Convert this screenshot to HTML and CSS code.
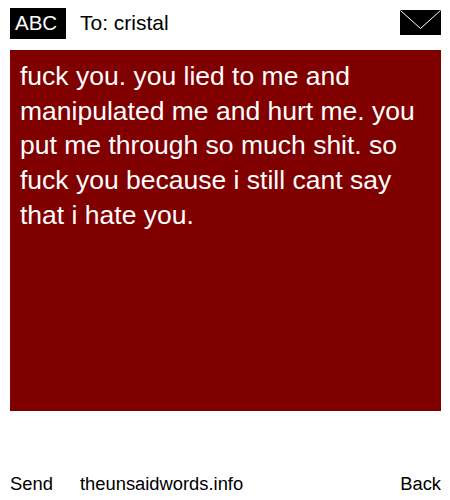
FILE: index.html
```
<!DOCTYPE html>
<html>
<head>
<meta charset="utf-8">
<link rel="stylesheet" href="styles.css">
</head>
<body>
<div class="page">
  <header class="top">
    <span class="abc">ABC</span>
    <span class="to">To: cristal</span>
    <svg class="env" width="41" height="25" viewBox="0 0 41 25"><rect width="41" height="25" fill="#000"/><path d="M0.5 0.5 L20.5 18.5 L40.5 0.5" fill="none" stroke="#fff" stroke-width="1"/></svg>
  </header>
  <main class="msg">fuck you. you lied to me and manipulated me and hurt me. you put me through so much shit. so fuck you because i still cant say that i hate you.</main>
  <footer class="bottom">
    <span class="send">Send</span>
    <span class="site">theunsaidwords.info</span>
    <span class="back">Back</span>
  </footer>
</div>
</body>
</html>
```
FILE: styles.css
```
html, body { margin: 0; padding: 0; background: #fff; }
.page {
  width: 450px; height: 500px; box-sizing: border-box;
  padding: 8px 9px 0 10px;
  display: flex; flex-direction: column;
  font-family: "Liberation Sans", Arial, sans-serif; color: #000;
}
.top { display: flex; align-items: flex-start; height: 31px; margin-bottom: 11px; font-size: 20.5px; }
.abc { background: #000; color: #fff; box-sizing: border-box; width: 56px; height: 31px; padding-left: 5px; line-height: 30px; }
.to { margin-left: 14px; flex: 1; font-size: 21px; line-height: 29px; height: 31px; }
.env { display: block; margin-top: 2px; }
.msg {
  background: #800000; color: #fff; height: 361px; box-sizing: border-box;
  padding: 9px 10px; font-size: 26.5px; line-height: 34.7px;
}
.bottom { display: flex; margin-top: 61px; font-size: 18.35px; line-height: 24px; }
.send { width: 70px; }
.site { flex: 1; }
```
